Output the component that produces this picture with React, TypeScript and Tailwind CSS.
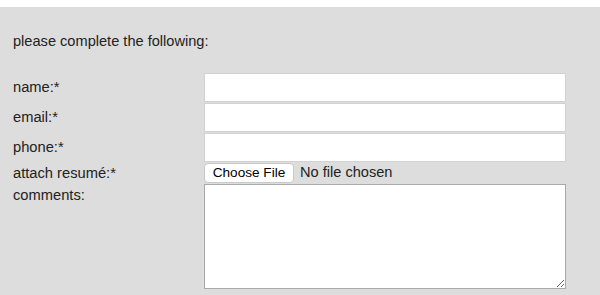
const font = { fontFamily: '"Liberation Sans", Arial, Helvetica, sans-serif' };

function Label({ children }: { children: React.ReactNode }) {
  return <div className="flex items-center text-[14.7px] text-[#222]">{children}</div>;
}

export default function App() {
  return (
    <div className="w-[600px] h-[295px] bg-white pt-[7px]" style={font}>
      <div className="h-[288px] bg-[#dddddd] pl-[13px] pt-[24px]">
        <p className="text-[14.6px] leading-[20px] text-[#222]">please complete the following:</p>

        <form className="mt-[22px] grid grid-cols-[191px_362px]">
          {/* text fields */}
          <Label>name:*</Label>
          <input
            type="text"
            className="h-[29px] bg-white border border-[#d2d2d2] outline-none"
          />
          <Label>email:*</Label>
          <input
            type="text"
            className="mt-[1px] h-[29px] bg-white border border-[#d2d2d2] outline-none"
          />
          <Label>phone:*</Label>
          <input
            type="text"
            className="mt-[1px] h-[29px] bg-white border border-[#d2d2d2] outline-none"
          />

          {/* file picker */}
          <Label>attach resumé:*</Label>
          <div className="flex items-center h-[21px]">
            <button
              type="button"
              className="h-[20px] w-[90px] rounded-[4px] bg-white border border-[#c9c9c9] text-[13.6px] text-black leading-none"
            >
              Choose File
            </button>
            <span className="ml-[6px] text-[14.6px] text-[#222]">No file chosen</span>
          </div>

          {/* comments */}
          <div className="pt-[3px] text-[14.7px] leading-[16px] text-[#222]">comments:</div>
          <textarea className="h-[105px] bg-white border border-[#a9a9a9] outline-none" />
        </form>
      </div>
    </div>
  );
}
